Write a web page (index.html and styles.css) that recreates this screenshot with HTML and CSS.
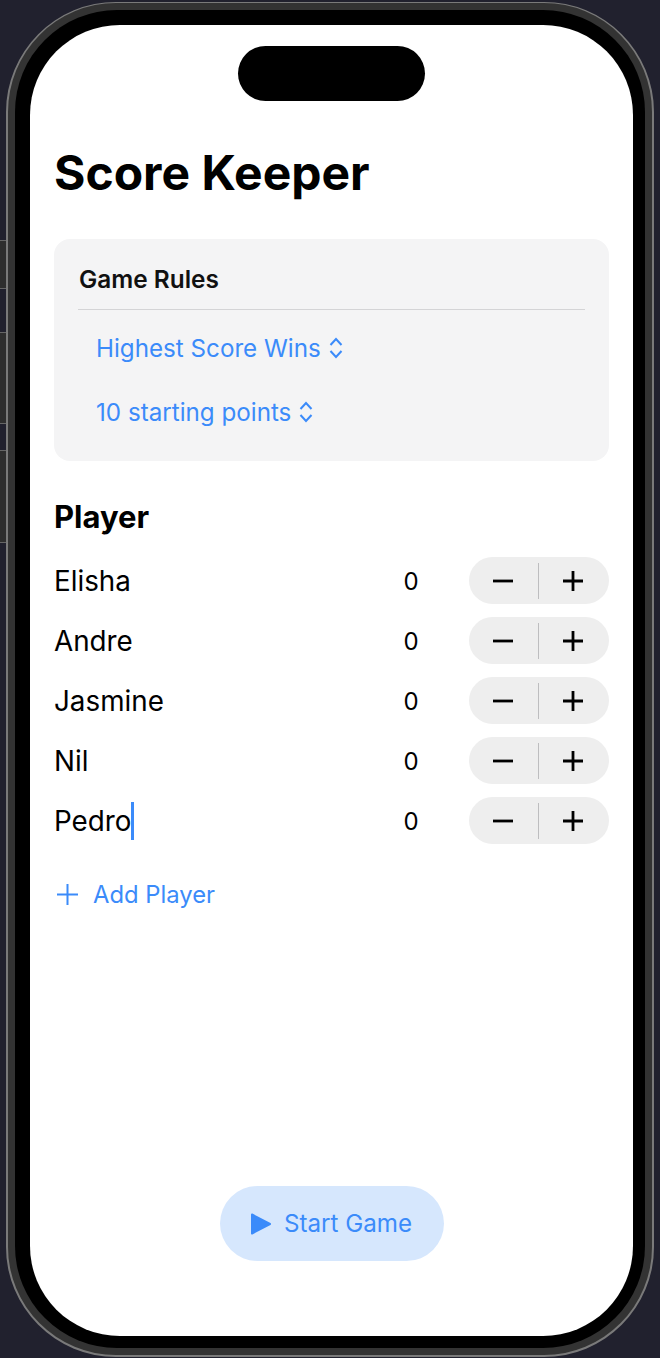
FILE: index.html
```html
<!DOCTYPE html>
<html lang="en">
<head>
    <meta charset="UTF-8">
    <meta name="viewport" content="width=device-width, initial-scale=1.0">
    <title>Score Keeper</title>
    <link rel="stylesheet" href="styles.css">
</head>
<body>

<span class="side-button side-button-action"></span>
<span class="side-button side-button-up"></span>
<span class="side-button side-button-down"></span>

<div class="phone">
    <div class="bezel">
        <main class="screen">
            <div class="island"></div>

            <h1>Score Keeper</h1>

            <section class="rules">
                <h2>Game Rules</h2>
                <button type="button" class="picker">
                    Highest Score Wins
                    <svg class="chevrons" viewBox="0 0 14 22"><path d="M1.5 8 7 2l5.500 6M1.500 14 7 20l5.500-6"/></svg>
                </button>
                <button type="button" class="picker">
                    10 starting points
                    <svg class="chevrons" viewBox="0 0 14 22"><path d="M1.5 8 7 2l5.500 6M1.500 14 7 20l5.500-6"/></svg>
                </button>
            </section>

            <h2 class="players-title">Player</h2>

            <ul class="players">
                <li class="player">
                    <span class="player-name">Elisha</span>
                    <span class="player-score">0</span>
                    <div class="stepper">
                        <button type="button"><svg viewBox="0 0 20 20"><path d="M0 10h20"/></svg></button>
                        <button type="button"><svg viewBox="0 0 20 20"><path d="M0 10h20M10 0v20"/></svg></button>
                    </div>
                </li>
                <li class="player">
                    <span class="player-name">Andre</span>
                    <span class="player-score">0</span>
                    <div class="stepper">
                        <button type="button"><svg viewBox="0 0 20 20"><path d="M0 10h20"/></svg></button>
                        <button type="button"><svg viewBox="0 0 20 20"><path d="M0 10h20M10 0v20"/></svg></button>
                    </div>
                </li>
                <li class="player">
                    <span class="player-name">Jasmine</span>
                    <span class="player-score">0</span>
                    <div class="stepper">
                        <button type="button"><svg viewBox="0 0 20 20"><path d="M0 10h20"/></svg></button>
                        <button type="button"><svg viewBox="0 0 20 20"><path d="M0 10h20M10 0v20"/></svg></button>
                    </div>
                </li>
                <li class="player">
                    <span class="player-name">Nil</span>
                    <span class="player-score">0</span>
                    <div class="stepper">
                        <button type="button"><svg viewBox="0 0 20 20"><path d="M0 10h20"/></svg></button>
                        <button type="button"><svg viewBox="0 0 20 20"><path d="M0 10h20M10 0v20"/></svg></button>
                    </div>
                </li>
                <li class="player">
                    <span class="player-name">Pedro<span class="caret"></span></span>
                    <span class="player-score">0</span>
                    <div class="stepper">
                        <button type="button"><svg viewBox="0 0 20 20"><path d="M0 10h20"/></svg></button>
                        <button type="button"><svg viewBox="0 0 20 20"><path d="M0 10h20M10 0v20"/></svg></button>
                    </div>
                </li>
            </ul>

            <button type="button" class="add-player">
                <svg viewBox="0 0 21 21"><path d="M0 10.500h21M10.500 0v21"/></svg>
                Add Player
            </button>

            <button type="button" class="start-game">
                <svg viewBox="0 0 20 22"><path d="M1 1.500 19 11 1 20.500z"/></svg>
                Start Game
            </button>
        </main>
    </div>
</div>

</body>
</html>
```

FILE: styles.css
```css
/* Page and device frame */
html, body {
    height: 100%;
}

body {
    margin: 0;
    padding: 2px 6px 1px;
    box-sizing: border-box;
    background-color: #21212e;
    font-family: Inter, "Liberation Sans", sans-serif;
    color: #000;
    overflow: hidden;
}

button {
    font-family: inherit;
    border: none;
    background: none;
    padding: 0;
}

svg {
    display: block;
}

.phone {
    height: 100%;
    box-sizing: border-box;
    padding: 7px;
    background-color: #333;
    border: 2px solid #7a7a7a;
    border-top-width: 1px;
    border-radius: 110px;
}

.bezel {
    height: 100%;
    box-sizing: border-box;
    padding: 15px 12px 12px 15px;
    background-color: #000;
    border-radius: 102px;
}

.side-button {
    position: absolute;
    left: 0;
    width: 6px;
    background-color: #2e2e2e;
    border-top: 1px solid #666;
    border-bottom: 1px solid #666;
}

.side-button-action { top: 240px; height: 47px; }
.side-button-up { top: 332px; height: 90px; }
.side-button-down { top: 450px; height: 91px; }

/* Screen */
.screen {
    position: relative;
    height: 100%;
    box-sizing: border-box;
    display: flex;
    flex-direction: column;
    padding: 0 24px;
    background-color: #fff;
    border-radius: 90px;
}

.island {
    position: absolute;
    top: 21px;
    left: 208px;
    width: 187px;
    height: 55px;
    background-color: #000;
    border-radius: 28px;
}

h1 {
    margin: 120px 0 0;
    font-size: 48px;
    line-height: 55px;
    font-weight: 700;
}

/* Game rules card */
.rules {
    margin-top: 39px;
    height: 222px;
    box-sizing: border-box;
    padding: 0 24px;
    background-color: #f4f4f5;
    border-radius: 16px;
}

.rules h2 {
    margin: 0 0 6px;
    height: 71px;
    box-sizing: border-box;
    padding: 25px 0 0 1px;
    font-size: 24.400px;
    line-height: 30px;
    font-weight: 600;
    color: #111;
    border-bottom: 1px solid #d4d4d6;
}

.picker {
    display: flex;
    align-items: center;
    gap: 8px;
    height: 64px;
    margin-left: 18px;
    font-size: 24.200px;
    color: #3b8bfa;
}

.chevrons {
    width: 14px;
    height: 22px;
    fill: none;
    stroke: #3b8bfa;
    stroke-width: 2;
}

/* Player list */
.players-title {
    margin: 36px 0 0;
    font-size: 31px;
    line-height: 40px;
    font-weight: 700;
}

.players {
    list-style: none;
    margin: 20px 0 0;
    padding: 0;
}

.player {
    display: flex;
    align-items: center;
    height: 47px;
    margin-bottom: 13px;
}

.player-name {
    flex: 1;
    font-size: 27.800px;
    display: flex;
    align-items: center;
}

.caret {
    width: 3px;
    height: 38px;
    margin-left: -1px;
    background-color: #3b8bfa;
}

.player-score {
    width: 58px;
    margin-right: 29px;
    padding-top: 1px;
    font-size: 24px;
    text-align: center;
}

.stepper {
    display: flex;
    align-items: center;
    width: 140px;
    height: 47px;
    background-color: #eee;
    border-radius: 24px;
}

.stepper button {
    flex: 1;
    height: 36px;
    display: flex;
    align-items: center;
    justify-content: center;
}

.stepper button:first-child {
    flex: none;
    width: 69px;
    padding-right: 1px;
}

.stepper button + button {
    padding-right: 2px;
    border-left: 1px solid #bdbdbf;
}

.stepper svg {
    width: 20px;
    height: 20px;
    fill: none;
    stroke: #000;
    stroke-width: 2.800;
}

/* Actions */
.add-player {
    display: flex;
    align-items: center;
    gap: 15px;
    margin-top: 20px;
    height: 34px;
    font-size: 23.800px;
    color: #3b8bfa;
}

.add-player svg {
    width: 21px;
    height: 21px;
    margin-left: 3px;
    fill: none;
    stroke: #3b8bfa;
    stroke-width: 2;
}

.start-game {
    display: flex;
    align-items: center;
    justify-content: center;
    gap: 13px;
    align-self: center;
    width: 224px;
    height: 75px;
    margin-top: auto;
    margin-bottom: 75px;
    font-size: 24.200px;
    color: #3b8bfa;
    background-color: #d6e7fd;
    border-radius: 38px;
}

.start-game svg {
    width: 20px;
    height: 22px;
    fill: #3b8bfa;
    stroke: #3b8bfa;
    stroke-width: 2;
    stroke-linejoin: round;
}
```
